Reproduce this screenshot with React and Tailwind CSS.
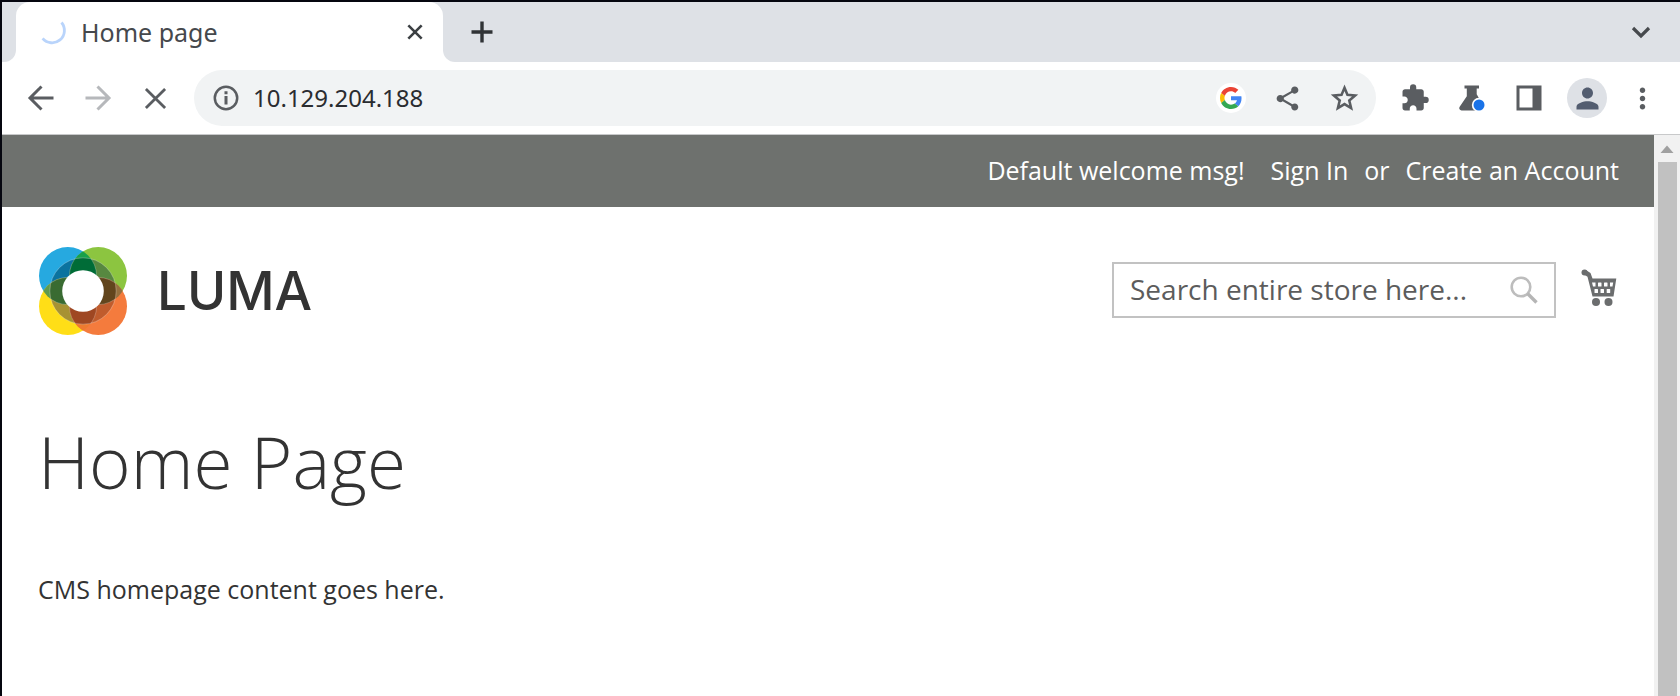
import React from "react";
import { MdShare, MdExtension, MdPerson, MdMoreVert } from "react-icons/md";

function Cross({ size, stroke, className }) {
  return (
    <svg width={size} height={size} viewBox="0 0 24 24" className={className} aria-hidden="true">
      <path d="M2 2 22 22M22 2 2 22" fill="none" stroke="currentColor" strokeWidth={stroke} />
    </svg>
  );
}

function Arrow({ className }) {
  return (
    <svg width="30" height="30" viewBox="0 0 30 30" className={className} aria-hidden="true">
      <path d="M27.500 15H4.500M15.500 3.500 4 15l11.500 11.500" fill="none" stroke="currentColor" strokeWidth="3" />
    </svg>
  );
}

function GoogleG() {
  return (
    <svg width="22" height="22" viewBox="0 0 48 48" aria-hidden="true">
      <path fill="#EA4335" d="M24 9.5c3.540 0 6.710 1.220 9.210 3.600l6.850-6.850C35.900 2.380 30.470 0 24 0 14.620 0 6.510 5.380 2.560 13.220l7.980 6.190C12.430 13.720 17.740 9.500 24 9.500z" />
      <path fill="#4285F4" d="M46.980 24.550c0-1.570-.15-3.090-.38-4.550H24v9.020h12.940c-.58 2.960-2.260 5.480-4.780 7.180l7.730 6c4.510-4.180 7.090-10.360 7.090-17.650z" />
      <path fill="#FBBC05" d="M10.530 28.590c-.48-1.450-.76-2.990-.76-4.590s.27-3.140.76-4.590l-7.980-6.190C.92 16.460 0 20.120 0 24c0 3.880.92 7.540 2.560 10.780l7.970-6.190z" />
      <path fill="#34A853" d="M24 48c6.480 0 11.930-2.130 15.890-5.810l-7.730-6c-2.150 1.450-4.920 2.300-8.160 2.300-6.260 0-11.570-4.220-13.470-9.910l-7.980 6.190C6.510 42.620 14.620 48 24 48z" />
    </svg>
  );
}

function TabStrip() {
  return (
    <div className="bg-white">
      <div className="flex h-[60px]">
        <div className="w-[14px] rounded-br-[12px] bg-[#dee1e6]" />
        <div className="w-[427px] bg-[linear-gradient(#dee1e6_50%,#fff_50%)]">
          <div className="flex h-full items-center rounded-t-[14px] bg-white pr-5 pl-[23px]">
            <svg width="28" height="28" viewBox="0 0 28 28" aria-hidden="true">
              <path d="M22.500 4.500A12 12 0 0 1 3.600 20.400" fill="none" stroke="#b9d4fb" strokeWidth="2.800" />
            </svg>
            <span className="ml-[14px] flex-1 font-['Noto_Sans','Open_Sans',sans-serif] text-[25px] leading-8 text-[#45484c]">
              Home page
            </span>
            <button type="button" aria-label="Close tab" className="text-[#3c4043]">
              <Cross size={16} stroke={3.9} />
            </button>
          </div>
        </div>
        <div className="flex flex-1 items-center justify-between rounded-bl-[12px] bg-[#dee1e6] px-[27px] text-[#303336]">
          <button type="button" aria-label="New tab">
            <svg width="24" height="24" viewBox="0 0 24 24" aria-hidden="true">
              <path d="M12 1.500v21M1.500 12h21" stroke="currentColor" strokeWidth="3.400" />
            </svg>
          </button>
          <button type="button" aria-label="Search tabs">
            <svg width="24" height="24" viewBox="0 0 24 24" aria-hidden="true">
              <path d="m4 8 8 8 8-8" fill="none" stroke="#46494d" strokeWidth="3.200" />
            </svg>
          </button>
        </div>
      </div>
    </div>
  );
}

function Toolbar() {
  return (
    <div className="flex h-[73px] items-center border-b border-[#c8c9ca] bg-white pr-[21px] pl-6 text-[#5a5d61]">
      <div className="flex items-center gap-[27px]">
        <button type="button" aria-label="Back">
          <Arrow />
        </button>
        <button type="button" aria-label="Forward" className="text-[#b6b8bb]">
          <Arrow className="-scale-x-100" />
        </button>
        <button type="button" aria-label="Stop loading" className="px-1">
          <Cross size={23} stroke={2.9} />
        </button>
      </div>
      <div className="ml-[23px] flex h-14 flex-1 items-center rounded-full bg-[#f1f3f4] pr-4 pl-[17px]">
        <label htmlFor="address" aria-label="Address">
          <svg width="30" height="30" viewBox="0 0 30 30" aria-hidden="true">
            <circle cx="15" cy="15" r="11.200" fill="none" stroke="currentColor" strokeWidth="2.500" />
            <path d="M15 13v8.500M15 8.200v3" stroke="currentColor" strokeWidth="3" />
          </svg>
        </label>
        <input
          id="address"
          type="text"
          aria-label="Address"
          defaultValue="10.129.204.188"
          className="ml-3 h-12 min-w-0 flex-1 bg-transparent pb-0.5 font-['Noto_Sans','Open_Sans',sans-serif] text-[24px] text-[#2a2c30] outline-none"
        />
        <div className="flex items-center gap-[27px]">
          <button type="button" aria-label="Search with Google" className="rounded-full bg-white p-1">
            <GoogleG />
          </button>
          <button type="button" aria-label="Share">
            <MdShare size={29} />
          </button>
          <button type="button" aria-label="Bookmark">
            <svg width="31" height="31" viewBox="0 0 24 24" aria-hidden="true">
              <path
                d="m12 3.700 2.300 5.500 5.900.5-4.500 3.900 1.400 5.800L12 16.300l-5.100 3.100 1.400-5.800-4.500-3.900 5.900-.5z"
                fill="none"
                stroke="currentColor"
                strokeWidth="2"
              />
            </svg>
          </button>
        </div>
      </div>
      <div className="ml-[24px] flex items-center gap-[27px]">
        <button type="button" aria-label="Extensions">
          <MdExtension size={30} />
        </button>
        <button type="button" aria-label="Experiments">
          <svg width="30" height="30" viewBox="0 0 30 30" aria-hidden="true">
            <path d="M7.500 2.500h14.500v3h-2.300v5.800L27 24a2.400 2.400 0 0 1-2 3.500H4.500A2.400 2.400 0 0 1 2.500 24l7.300-10.700V5.500H7.500z" fill="currentColor" />
            <circle cx="22" cy="22" r="7.200" fill="#fff" />
            <circle cx="22" cy="22" r="5.500" fill="#1a73e8" />
          </svg>
        </button>
        <button type="button" aria-label="Side panel">
          <svg width="30" height="30" viewBox="0 0 30 30" aria-hidden="true">
            <path d="M2.500 2.500h25v25h-25zM5.500 5.500v19h13v-19z" fill="currentColor" fillRule="evenodd" />
          </svg>
        </button>
        <button type="button" aria-label="Profile" className="-mx-1 flex size-10 items-center justify-center rounded-full bg-[#dee1e6] text-[#535d70]">
          <MdPerson size={33} />
        </button>
        <button type="button" aria-label="Menu" className="-ml-1">
          <MdMoreVert size={33} />
        </button>
      </div>
    </div>
  );
}

function LumaMark() {
  return (
    <svg width="88" height="88" viewBox="0 0 88 88" aria-hidden="true">
      <defs>
        <clipPath id="blue"><circle cx="28.800" cy="28.800" r="28.800" /></clipPath>
        <clipPath id="orange"><circle cx="59.200" cy="59.200" r="28.800" /></clipPath>
        <clipPath id="ring"><circle cx="44" cy="44" r="33.200" /></clipPath>
      </defs>
      <circle cx="28.800" cy="28.800" r="28.800" fill="#26a9e0" />
      <circle cx="59.200" cy="28.800" r="28.800" fill="#8cc540" />
      <circle cx="28.800" cy="59.200" r="28.800" fill="#ffde17" />
      <circle cx="59.200" cy="59.200" r="28.800" fill="#f47b3d" />
      <g clipPath="url(#blue)">
        <circle cx="59.200" cy="28.800" r="28.800" fill="#18a04a" />
        <circle cx="28.800" cy="59.200" r="28.800" fill="#5f9a4e" />
      </g>
      <g clipPath="url(#orange)">
        <circle cx="59.200" cy="28.800" r="28.800" fill="#94703f" />
        <circle cx="28.800" cy="59.200" r="28.800" fill="#ee7a30" />
      </g>
      <g clipPath="url(#ring)">
        <circle cx="28.800" cy="28.800" r="28.800" fill="#0b739f" />
        <circle cx="59.200" cy="28.800" r="28.800" fill="#578840" />
        <circle cx="28.800" cy="59.200" r="28.800" fill="#a79233" />
        <circle cx="59.200" cy="59.200" r="28.800" fill="#c05c2d" />
        <g clipPath="url(#blue)">
          <circle cx="59.200" cy="28.800" r="28.800" fill="#006c37" />
          <circle cx="28.800" cy="59.200" r="28.800" fill="#396b32" />
        </g>
        <g clipPath="url(#orange)">
          <circle cx="59.200" cy="28.800" r="28.800" fill="#62451d" />
          <circle cx="28.800" cy="59.200" r="28.800" fill="#9f4722" />
        </g>
        <g fill="none" stroke="#fff" strokeOpacity="0.3" strokeWidth="0.800">
          <circle cx="28.800" cy="28.800" r="28.800" />
          <circle cx="59.200" cy="28.800" r="28.800" />
          <circle cx="28.800" cy="59.200" r="28.800" />
          <circle cx="59.200" cy="59.200" r="28.800" />
        </g>
      </g>
      <circle cx="44" cy="44" r="33.200" fill="none" stroke="#fff" strokeOpacity="0.35" strokeWidth="0.800" />
      <circle cx="44" cy="44" r="20.800" fill="#fff" />
    </svg>
  );
}

function CartIcon() {
  return (
    <svg width="38" height="38" viewBox="0 0 38 38" aria-hidden="true">
      <g fill="#6b6d6e">
        <circle cx="4.500" cy="4.500" r="3" />
        <path d="M4 6.500 5.500 1.800 10.500 5 12.500 10.500H36.300L33.500 28.500H12.500L7.500 8.800z" />
        <circle cx="16" cy="34" r="4" />
        <circle cx="28.500" cy="34" r="4" />
      </g>
      <g fill="#fff">
        <path d="M12 14.500h3.500v4H13z" />
        <rect x="18" y="14.500" width="3.500" height="4" rx="0.500" />
        <rect x="24" y="14.500" width="3.500" height="4" rx="0.500" />
        <path d="M30 14.500h3.200l-.7 4H30z" />
        <rect x="14.500" y="21" width="3.500" height="4" rx="0.500" />
        <rect x="20.500" y="21" width="3.500" height="4" rx="0.500" />
        <rect x="26.700" y="21" width="3.500" height="4" rx="0.500" />
      </g>
    </svg>
  );
}

function StorePage() {
  return (
    <div className="min-w-0 flex-1 bg-white">
      <header>
        <div className="flex h-[72px] items-center justify-end bg-[#6e716e] pr-[35px] pb-[3px] text-[25px] leading-9 text-white">
          <span>Default welcome msg!</span>
          <a href="#sign-in" className="ml-[26px]">Sign In</a>
          <span className="ml-4">or</span>
          <a href="#create-account" className="ml-4">Create an Account</a>
        </div>
        <div className="flex items-start justify-between pt-10 pr-9 pl-[37px]">
          <a href="#home" className="flex items-center gap-[30px]">
            <LumaMark />
            <span className="font-['Inter',sans-serif] text-[53px] leading-[64px] font-medium text-[#333]">LUMA</span>
          </a>
          <div className="flex items-start gap-6 pt-[15px]">
            <form role="search" className="flex h-[56px] w-[444px] items-center border-2 border-[#c2c2c2] px-4" onSubmit={(e) => e.preventDefault()}>
              <input
                id="store-search"
                type="text"
                aria-label="Search"
                placeholder="Search entire store here..."
                className="h-12 min-w-0 flex-1 bg-transparent pb-0.5 text-[28px] outline-none placeholder:text-[#5c5c5c]"
              />
              <label htmlFor="store-search" aria-label="Search">
                <svg width="28" height="28" viewBox="0 0 28 28" aria-hidden="true">
                  <circle cx="11" cy="11" r="9.300" fill="none" stroke="#bdbdbd" strokeWidth="2.600" />
                  <path d="m17.500 17.500 9 9" stroke="#b5b5b5" strokeWidth="3.400" />
                </svg>
              </label>
            </form>
            <a href="#cart" aria-label="My cart" className="pt-1.5">
              <CartIcon />
            </a>
          </div>
        </div>
      </header>
      <main className="px-9">
        <h1 className="mt-[77px] text-[71px] leading-[100px] font-light text-[#333]">Home Page</h1>
        <p className="mt-[59px] text-[25px] leading-9 text-[#333]">CMS homepage content goes here.</p>
      </main>
    </div>
  );
}

function Scrollbar() {
  return (
    <div className="flex w-[26px] flex-col items-center bg-[#f1f1f1]" aria-hidden="true">
      <svg width="14" height="27" viewBox="0 0 14 27">
        <path d="M0.500 18 7 10.500 13.500 18z" fill="#a0a0a0" />
      </svg>
      <div className="w-[19px] flex-1 bg-[#c1c1c1]" />
    </div>
  );
}

export default function App() {
  return (
    <div className="flex min-h-screen flex-col border-t-2 border-l-2 border-[#05060f] font-['Open_Sans',sans-serif]">
      <TabStrip />
      <Toolbar />
      <div className="flex flex-1">
        <StorePage />
        <Scrollbar />
      </div>
    </div>
  );
}
